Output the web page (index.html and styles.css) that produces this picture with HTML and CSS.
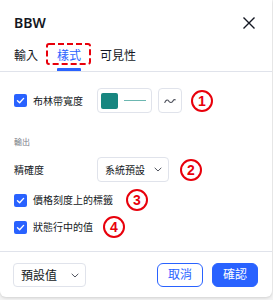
FILE: index.html
```html
<!DOCTYPE html>
<html lang="zh-Hant">
<head>
<meta charset="utf-8">
<link rel="stylesheet" href="styles.css">
</head>
<body>
<div class="dialog">
  <div class="header">
    <div class="title">BBW</div>
    <svg class="close" width="12" height="12" viewBox="0 0 12 12"><path d="M0.5 0.5L11.5 11.5M11.5 0.5L0.5 11.5" stroke="#131722" stroke-width="1.4" fill="none"/></svg>
  </div>
  <div class="tabs">
    <div class="tab">輸入</div>
    <div class="tab active">樣式
      <svg class="mark" width="45" height="22" viewBox="0 0 45 22"><rect x="1" y="1" width="43" height="20" rx="2" fill="none" stroke="#e8000b" stroke-width="2" stroke-dasharray="6 3"/></svg>
    </div>
    <div class="tab">可見性</div>
  </div>
  <div class="content">
    <div class="row row-main">
      <div class="label-col">
        <span class="cb"><svg width="13" height="13" viewBox="0 0 13 13"><path d="M3.5 6.8L5.6 8.8L9.6 4.4" stroke="#fff" stroke-width="1.4" fill="none" stroke-linecap="round" stroke-linejoin="round"/></svg></span>
        <span class="text">布林帶寬度</span>
      </div>
      <div class="color-btn"><span class="swatch"></span><span class="line"></span></div>
      <div class="wave-btn"><svg width="12" height="8" viewBox="0 0 12 8"><path d="M0.8 5.5C2.2 2.5 3.6 2.5 5 4.3C6.4 6 7.8 6 9.2 3.6C9.8 2.6 10.5 2.4 11.2 2.8" stroke="#50535e" stroke-width="1.1" fill="none" stroke-linecap="round"/></svg></div>
      <span class="badge b1">1</span>
    </div>
    <div class="section">輸出</div>
    <div class="row row-main">
      <div class="label-col"><span class="text">精確度</span></div>
      <div class="select">
        <span>系統預設</span>
        <svg width="8" height="5" viewBox="0 0 8 5"><path d="M0.7 0.8L4 4L7.3 0.8" stroke="#50535e" stroke-width="1" fill="none"/></svg>
      </div>
      <span class="badge b2">2</span>
    </div>
    <div class="row row-check r3">
      <span class="cb"><svg width="13" height="13" viewBox="0 0 13 13"><path d="M3.5 6.8L5.6 8.8L9.6 4.4" stroke="#fff" stroke-width="1.4" fill="none" stroke-linecap="round" stroke-linejoin="round"/></svg></span>
      <span class="text">價格刻度上的標籤</span>
      <span class="badge b3">3</span>
    </div>
    <div class="row row-check r4">
      <span class="cb"><svg width="13" height="13" viewBox="0 0 13 13"><path d="M3.5 6.8L5.6 8.8L9.6 4.4" stroke="#fff" stroke-width="1.4" fill="none" stroke-linecap="round" stroke-linejoin="round"/></svg></span>
      <span class="text">狀態行中的值</span>
      <span class="badge b4">4</span>
    </div>
  </div>
  <div class="footer">
    <div class="select footer-select">
      <span>預設值</span>
      <svg width="8" height="5" viewBox="0 0 8 5"><path d="M0.7 0.8L4 4L7.3 0.8" stroke="#50535e" stroke-width="1" fill="none"/></svg>
    </div>
    <div class="actions">
      <button class="btn cancel">取消</button>
      <button class="btn ok">確認</button>
    </div>
  </div>
</div>
</body>
</html>
```
FILE: styles.css
```css
* { box-sizing: border-box; }
html, body { margin: 0; padding: 0; }
body {
  width: 273px;
  height: 300px;
  background: #f3f3f3;
  font-family: "Noto Sans", "Noto Sans CJK TC", sans-serif;
  color: #131722;
  overflow: hidden;
}
.dialog {
  width: 272px;
  background: #fff;
  border-radius: 0 0 6px 6px;
  box-shadow: 0 1px 3px rgba(0,0,0,0.15);
  display: flex;
  flex-direction: column;
}
.header {
  height: 43px;
  display: flex;
  align-items: center;
  justify-content: space-between;
  padding: 3px 17px 0 14px;
}
.title {
  font-size: 14px;
  font-weight: 600;
  line-height: 16px;
}
.close { display: block; }
.tabs {
  display: flex;
  gap: 19px;
  padding-left: 14px;
  border-bottom: 1px solid #e0e3eb;
}
.tab {
  position: relative;
  height: 28px;
  padding-top: 5px;
  font-size: 12px;
  line-height: 16px;
  color: #131722;
}
.tab.active { color: #2962ff; }
.tab.active::after {
  content: "";
  position: absolute;
  left: 0;
  right: 0;
  bottom: 0;
  height: 3px;
  background: #2962ff;
  border-radius: 1px 1px 0 0;
}
.mark {
  position: absolute;
  left: -11px;
  top: 0;
}
.content {
  padding: 16px 14px 14px;
  display: flex;
  flex-direction: column;
}
.row {
  display: flex;
  align-items: center;
}
.row-main { height: 25px; }
.label-col {
  width: 83px;
  display: flex;
  align-items: center;
  gap: 6px;
}
.text {
  font-size: 10px;
  line-height: 14px;
}
.cb {
  width: 13px;
  height: 13px;
  border-radius: 2px;
  background: #2962ff;
  display: flex;
  flex: none;
}
.color-btn {
  width: 55px;
  height: 25px;
  border: 1px solid #e0e3eb;
  border-radius: 4px;
  display: flex;
  align-items: center;
  padding-left: 3px;
  gap: 6px;
}
.swatch {
  width: 17px;
  height: 16px;
  border-radius: 2px;
  background: #178680;
}
.line {
  width: 22px;
  height: 1px;
  background: #6cb7b1;
}
.wave-btn {
  width: 24px;
  height: 25px;
  margin-left: 6px;
  border: 1px solid #e0e3eb;
  border-radius: 4px;
  display: flex;
  align-items: center;
  justify-content: center;
}
.badge {
  width: 22px;
  height: 22px;
  border: 2px solid #e8000b;
  border-radius: 50%;
  color: #e8000b;
  font-family: "Liberation Sans", sans-serif;
  font-weight: 700;
  font-size: 14px;
  line-height: 18px;
  text-align: center;
  flex: none;
}
.b1 { margin-left: 9px; }
.b2 { margin-left: 11px; }
.b3 { margin-left: 13px; }
.b4 { margin-left: 10px; }
.section {
  margin-top: 24px;
  font-size: 8px;
  line-height: 10px;
  color: #787b86;
}
.section + .row { margin-top: 10px; }
.select {
  width: 72px;
  height: 25px;
  border: 1px solid #e0e3eb;
  border-radius: 4px;
  display: flex;
  align-items: center;
  justify-content: space-between;
  padding: 0 6px 0 7px;
  font-size: 10px;
}
.row-check {
  height: 20px;
  gap: 6px;
}
.row-check .badge { margin-left: auto; }
.row-check .badge.b3 { margin-left: 7px; }
.row-check .badge.b4 { margin-left: 4px; }
.r3 { margin-top: 8px; }
.r4 { margin-top: 7px; }
.footer {
  border-top: 1px solid #e0e3eb;
  padding: 11px 14px 10px 13px;
  display: flex;
  align-items: center;
  justify-content: space-between;
}
.footer-select {
  width: 73px;
  height: 24px;
  font-size: 12px;
  padding: 0 6px 0 7px;
}
.actions {
  display: flex;
  gap: 9px;
}
.btn {
  width: 46px;
  height: 24px;
  border-radius: 6px;
  font-family: "Noto Sans", "Noto Sans CJK TC", sans-serif;
  font-size: 12px;
  line-height: 16px;
  padding: 0;
  cursor: pointer;
}
.cancel {
  background: #fff;
  border: 1px solid #2962ff;
  color: #2962ff;
}
.ok {
  background: #2962ff;
  border: 1px solid #2962ff;
  color: #fff;
}
```
